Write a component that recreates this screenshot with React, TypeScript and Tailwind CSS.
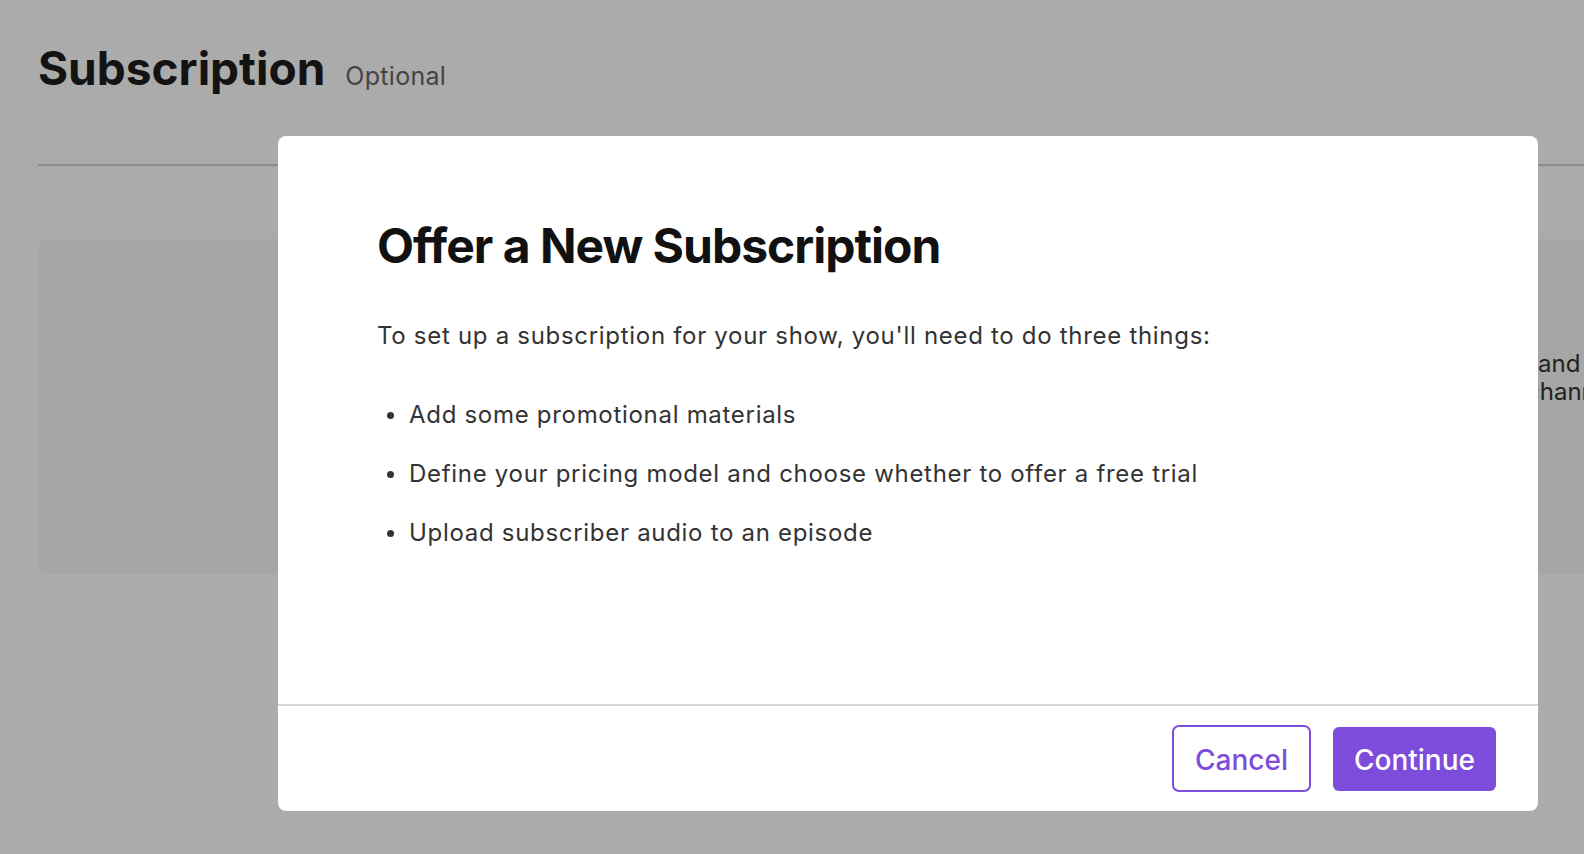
export default function App() {
  return (
    <div className="relative w-full h-screen overflow-hidden bg-white font-['Inter',sans-serif]">
      {/* page behind the dialog */}
      <div className="pl-[38px]">
        <div className="h-[166px] border-b-2 border-[#d2d2d2] pt-[45px]">
          <div className="flex items-baseline gap-[20px]">
            <h1 className="text-[46px] leading-none font-bold text-[#1d1d1f]">
              Subscription
            </h1>
            <span className="text-[25px] leading-none text-[#666] tracking-[0.3px]">Optional</span>
          </div>
        </div>

        <div className="mt-[73px] h-[335px] rounded-l-xl bg-[#f8f8f8] flex">
          <div className="w-[1500px] shrink-0" />
          <div className="pt-[111px] text-[24px] leading-[28px] text-[#333] whitespace-nowrap">
            <div>and</div>
            <div className="-ml-[12px]">channel</div>
          </div>
        </div>
      </div>

      {/* overlay */}
      <div className="absolute inset-0 bg-black/[0.33]" />

      {/* dialog */}
      <div className="absolute left-[278px] top-[136px] w-[1260px] h-[675px] rounded-[8px] bg-white flex flex-col">
        <div className="flex-1 pl-[99px] pt-[86px]">
          <h2 className="text-[48px] leading-none font-bold text-[#111] tracking-[-1px]">
            Offer a New Subscription
          </h2>
          <p className="mt-[54px] text-[24px] leading-none text-[#333] tracking-[0.7px]">
            To set up a subscription for your show, you'll need to do three things:
          </p>
          <ul className="mt-[55px] space-y-[35px]">
            {[
              "Add some promotional materials",
              "Define your pricing model and choose whether to offer a free trial",
              "Upload subscriber audio to an episode",
            ].map((item, index) => (
              <li key={index} className="flex items-center text-[24px] leading-none text-[#333] tracking-[0.7px]">
                <span className="ml-[10px] mr-[15px] w-[7px] h-[7px] rounded-full bg-[#333] shrink-0" />
                {item}
              </li>
            ))}
          </ul>
        </div>

        <div className="h-[107px] border-t-2 border-[#d6d6d6] flex items-center justify-end gap-[22px] pr-[42px]">
          <button className="w-[139px] h-[67px] rounded-[7px] border-2 border-[#7e4cdb] bg-white text-[28px] font-medium text-[#7e4cdb] pt-[2px]">
            Cancel
          </button>
          <button className="w-[163px] h-[64px] rounded-[6px] bg-[#7e4cdb] text-[28px] font-medium text-white pt-[2px]">
            Continue
          </button>
        </div>
      </div>
    </div>
  )
}
